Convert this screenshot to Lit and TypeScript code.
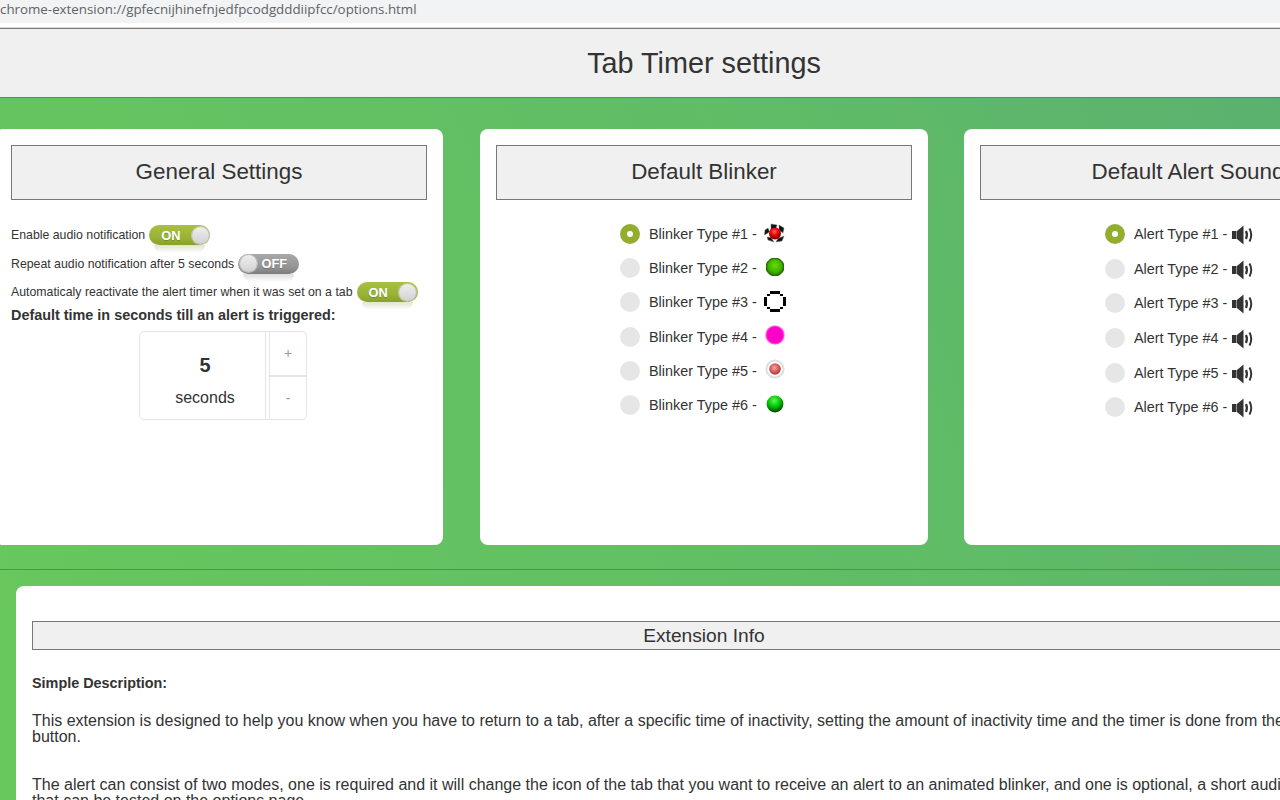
import { LitElement, html, css, svg } from "lit";
import { customElement } from "lit/decorators.js";

const defs = svg`
  <defs>
    <radialGradient id="r1" cx="45%" cy="35%" r="60%"><stop offset="0" stop-color="#ff6060"/><stop offset=".55" stop-color="#e00000"/><stop offset="1" stop-color="#800000"/></radialGradient>
    <radialGradient id="g2" cx="50%" cy="40%" r="60%"><stop offset="0" stop-color="#66dd00"/><stop offset=".7" stop-color="#40b000"/><stop offset="1" stop-color="#2a8000"/></radialGradient>
    <radialGradient id="m4" cx="50%" cy="50%" r="50%"><stop offset="0" stop-color="#ff00c8"/><stop offset=".78" stop-color="#ff00c8"/><stop offset="1" stop-color="#ff90e4"/></radialGradient>
    <radialGradient id="r5" cx="45%" cy="40%" r="60%"><stop offset="0" stop-color="#f0a8a8"/><stop offset=".6" stop-color="#d85858"/><stop offset="1" stop-color="#a03c3c"/></radialGradient>
    <radialGradient id="g6" cx="45%" cy="30%" r="70%"><stop offset="0" stop-color="#50ff50"/><stop offset=".55" stop-color="#00c000"/><stop offset="1" stop-color="#004000"/></radialGradient>
  </defs>`;

const blinkers = [
  svg`<g fill="#111" stroke="#777" stroke-width=".5">
      <path d="M8 1l6 1-1 3.500-5 1.500z"/><path d="M16 2l5 3-1 5-4-3z"/><path d="M21 13l-2 5-6 1 2-3.500z"/><path d="M11 19l-6-2-1-3 4 .500z"/><path d="M1.500 12L2 7l3-2 1.500 4z"/>
    </g><circle cx="12" cy="10.500" r="6" fill="url(#r1)"/>`,
  svg`<path d="M8 1h6l2 1 3 3 1 2v6l-1 2-3 3-2 1H8l-2-1-3-3-1-2V7l1-2 3-3z" transform="translate(1 0)" fill="#256f00"/><circle cx="12" cy="10" r="8" fill="url(#g2)"/>`,
  svg`<g fill="#000" shape-rendering="crispEdges">
      <rect x="7" y="0" width="10" height="3"/><rect x="7" y="18" width="10" height="3"/><rect x="1" y="6" width="3" height="9"/><rect x="20" y="6" width="3" height="9"/>
      <rect x="4" y="3" width="3" height="2"/><rect x="17" y="3" width="3" height="2"/><rect x="4" y="16" width="3" height="2"/><rect x="17" y="16" width="3" height="2"/>
    </g>`,
  svg`<circle cx="12" cy="10" r="9.800" fill="url(#m4)"/>`,
  svg`<circle cx="12" cy="10" r="9.600" fill="#dedede"/><circle cx="12" cy="10" r="7.600" fill="#fff"/><circle cx="12" cy="10" r="5.800" fill="url(#r5)"/>`,
  svg`<circle cx="12" cy="10" r="8.400" fill="url(#g6)"/>`,
];

const speaker = svg`
  <rect x="0" y="6" width="4.500" height="8" fill="#333"/>
  <path d="M5 6L11.500 .500V19.500L5 14z" fill="#333"/>
  <path d="M14 6q1.800 4 0 8" fill="none" stroke="#333" stroke-width="2.200"/>
  <path d="M17.500 3.500q3.500 6.500 0 13" fill="none" stroke="#333" stroke-width="2"/>`;

@customElement("app-root")
export class AppRoot extends LitElement {
  static styles = css`
    :host { display: block; width: 1280px; height: 800px; overflow: hidden; position: relative; background: #fff; font-family: "Liberation Sans", Arial, sans-serif; color: #333; }
    .addr { height: 23px; background: #f1f3f4; color: #5f6368; font: 13.330px/18px "Open Sans", sans-serif; white-space: nowrap; box-sizing: border-box; }
    .gap { height: 4px; background: #fff; border-bottom: 1px solid #ddd; }
    .page { width: 1408px; background: linear-gradient(65deg, #69c85c 0%, #60bc66 62%, #59ae72 100%); }
    .title { height: 68px; background: #f0f0f0; border-top: 1px solid #777; border-bottom: 1px solid #777; display: flex; align-items: center; justify-content: center; font-size: 28.800px; color: #333; }
    .row { display: flex; gap: 36px; padding-top: 31px; margin-left: -5px; }
    .card { flex: 0 0 448px; height: 416px; box-sizing: border-box; background: #fff; border-radius: 8px; padding: 16px; }
    .card:first-child { margin-right: 1px; }
    .head { height: 55px; box-sizing: border-box; padding-bottom: 2px; background: #f0f0f0; border: 1px solid #777; display: flex; align-items: center; justify-content: center; font-size: 22.400px; color: #333; }
    .opts { padding-top: 25px; font-size: 12.320px; }
    .opt { display: flex; align-items: center; height: 20px; margin-bottom: 8.500px; white-space: nowrap; }
    .toggle { position: relative; width: 61px; height: 20px; margin-left: 4px; border-radius: 10px; box-sizing: border-box; color: #fff; font-weight: bold; font-size: 12.800px; display: flex; align-items: center; flex: none; text-shadow: 0 1px 1px rgba(0,0,0,.2); }
    .toggle.on { background: linear-gradient(#a8c044, #98b236 65%, #87a228); justify-content: flex-start; padding-left: 12px; }
    .toggle.off { background: linear-gradient(#a8a8a8, #959595 65%, #7c7c7c); justify-content: flex-end; padding-right: 12px; }
    .toggle::before { content: ""; position: absolute; left: 5px; right: 5px; top: 20px; height: 8px; background: linear-gradient(rgba(130,150,60,.25), rgba(255,255,255,0)); border-radius: 0 0 10px 10px; }
    .toggle.off::before { background: linear-gradient(rgba(120,120,120,.25), rgba(255,255,255,0)); }
    .knob { position: absolute; top: 1.500px; width: 17px; height: 17px; border-radius: 50%; background: linear-gradient(#eee, #d2d2d2); box-shadow: 0 0 0 1px #c4c8b4; }
    .on .knob { right: 1.500px; }
    .off .knob { left: 1.500px; box-shadow: 0 0 0 1px #bdbdbd; }
    .label { font-size: 14.400px; font-weight: bold; color: #333; margin-top: -4px; line-height: 16px; white-space: nowrap; }
    .spin { display: grid; grid-template-columns: 125px 5px 1fr; width: 168px; height: 89px; margin: 8px 0 0 128px; box-sizing: border-box; border: 1px solid #e5e5e5; border-radius: 5px; }
    .val { display: flex; flex-direction: column; align-items: center; justify-content: flex-start; padding-left: 5px; }
    .num { font-size: 20px; font-weight: bold; margin-top: 22px; line-height: 23px; }
    .unit { font-size: 16px; margin-top: 12px; line-height: 18px; }
    .sep { border-left: 1px solid #e5e5e5; border-right: 1px solid #e5e5e5; box-sizing: border-box; }
    .btns { display: grid; grid-template-rows: 45px 1fr; color: #999; font-size: 14px; }
    .btns div { display: flex; align-items: center; justify-content: center; }
    .btns div:first-child { border-bottom: 2px solid #e5e5e5; }
    .list { margin: 17px auto 0; display: flex; flex-direction: column; }
    .rad { display: flex; align-items: center; font-size: 14.400px; white-space: nowrap; }
    .list.b { width: 168px; }
    .list.a { width: 166px; }
    .list.b .rad { height: 34.200px; }
    .list.a .rad { height: 34.600px; }
    .dot { width: 20px; height: 20px; border-radius: 50%; background: #e6e6e6; margin-right: 9px; display: flex; align-items: center; justify-content: center; flex: none; }
    .dot.sel { background: #93ad2f; }
    .dot.sel::after { content: ""; width: 6px; height: 6px; border-radius: 50%; background: #fff; }
    .ic { flex: none; display: block; }
    .b .ic { margin: -2px 0 0 6px; }
    .a .ic { margin: 2px 0 0 5px; }
    .band { margin-top: 24px; border-top: 1px solid #3f9f3f; padding: 16px 16px 0; }
    .info { background: #fff; border-radius: 8px 8px 0 0; padding: 35px 16px 30px; height: 300px; box-sizing: border-box; }
    .ihead { height: 29px; box-sizing: border-box; background: #f0f0f0; border: 1px solid #777; display: flex; align-items: center; justify-content: center; font-size: 19.200px; color: #333; }
    .info h4 { margin: 25px 0 0; font-size: 14.400px; line-height: 16px; color: #333; }
    .info p { margin: 22px 0 0; font-size: 16px; line-height: 16px; color: #333; }
    .info p + p { margin-top: 32px; }
  `;

  render() {
    const blink = ["1", "2", "3", "4", "5", "6"];
    return html`
      <div class="addr">chrome-extension://gpfecnijhinefnjedfpcodgdddiipfcc/options.html</div>
      <div class="gap"></div>
      <div class="page">
        <div class="title">Tab Timer settings</div>
        <div class="row">
          <section class="card">
            <div class="head">General Settings</div>
            <div class="opts">
              <div class="opt">Enable audio notification<span class="toggle on">ON<i class="knob"></i></span></div>
              <div class="opt">Repeat audio notification after 5 seconds<span class="toggle off">OFF<i class="knob"></i></span></div>
              <div class="opt">Automaticaly reactivate the alert timer when it was set on a tab<span class="toggle on">ON<i class="knob"></i></span></div>
              <div class="label">Default time in seconds till an alert is triggered:</div>
              <div class="spin">
                <div class="val"><div class="num">5</div><div class="unit">seconds</div></div>
                <div class="sep"></div>
                <div class="btns"><div>+</div><div>-</div></div>
              </div>
            </div>
          </section>
          <section class="card">
            <div class="head">Default Blinker</div>
            <div class="list b">
              ${blink.map((n, i) => html`<div class="rad"><span class="dot ${i === 0 ? "sel" : ""}"></span>Blinker Type #${n} - <svg class="ic" width="24" height="21" viewBox="0 0 24 21">${defs}${blinkers[i]}</svg></div>`)}
            </div>
          </section>
          <section class="card">
            <div class="head">Default Alert Sound</div>
            <div class="list a">
              ${blink.map((n, i) => html`<div class="rad"><span class="dot ${i === 0 ? "sel" : ""}"></span>Alert Type #${n} - <svg class="ic" width="22" height="20" viewBox="0 0 22 20">${speaker}</svg></div>`)}
            </div>
          </section>
        </div>
        <div class="band">
          <section class="info">
            <div class="ihead">Extension Info</div>
            <h4>Simple Description:</h4>
            <p>This extension is designed to help you know when you have to return to a tab, after a specific time of inactivity, setting the amount of inactivity time and the timer is done from the extension<br>button.</p>
            <p>The alert can consist of two modes, one is required and it will change the icon of the tab that you want to receive an alert to an animated blinker, and one is optional, a short audio<br>that can be tested on the options page.</p>
          </section>
        </div>
      </div>
    `;
  }
}
